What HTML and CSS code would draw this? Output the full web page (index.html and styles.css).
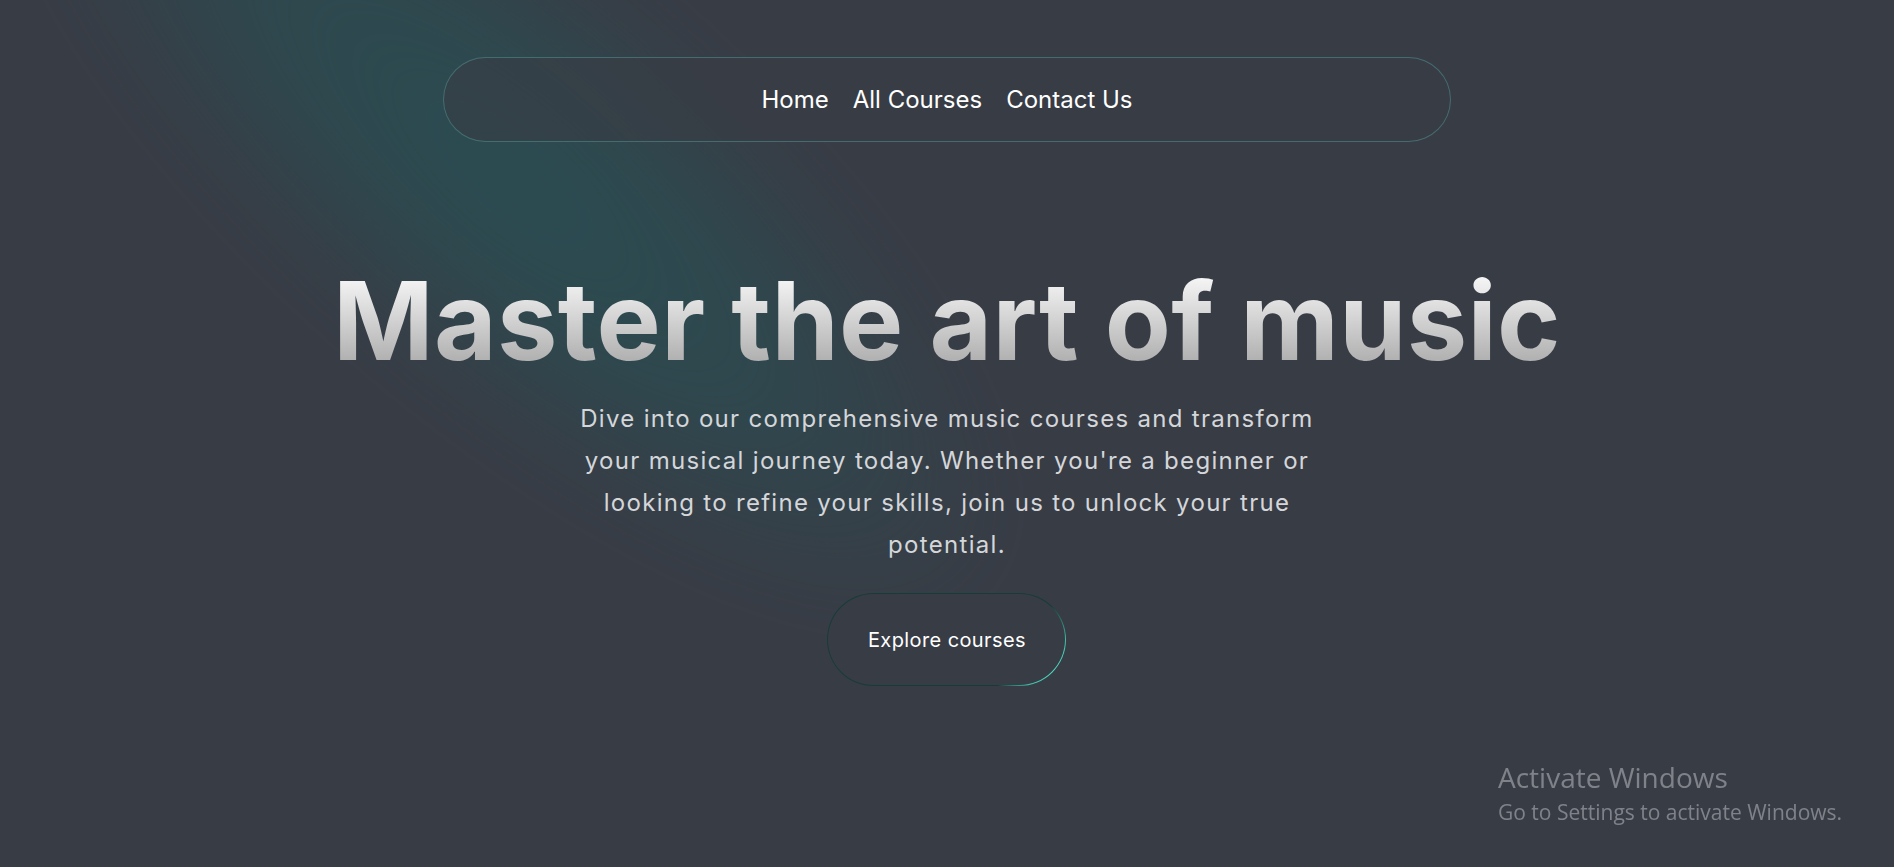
FILE: index.html
```html
<!DOCTYPE html>
<html lang="en">
<head>
<meta charset="utf-8">
<title>Music Courses</title>
<link rel="stylesheet" href="styles.css">
</head>
<body>
<div class="glow"></div>
<main class="page">
  <nav class="nav">
    <a class="nav-link" href="#">Home</a>
    <a class="nav-link" href="#">All Courses</a>
    <a class="nav-link" href="#">Contact Us</a>
  </nav>
  <section class="hero">
    <h1 class="hero-title">Master the art of music</h1>
    <p class="hero-text">Dive into our comprehensive music courses and transform your musical journey today. Whether you're a beginner or looking to refine your skills, join us to unlock your true potential.</p>
    <a class="hero-button" href="#">Explore courses</a>
  </section>
</main>
<div class="watermark">
  <div class="wm-title">Activate Windows</div>
  <div class="wm-sub">Go to Settings to activate Windows.</div>
</div>
</body>
</html>
```

FILE: styles.css
```css
* { box-sizing: border-box; }
html, body { height: 100%; }
body {
  margin: 0;
  background: #383c45;
  font-family: Inter, "Noto Sans", sans-serif;
  color: #fff;
  overflow: hidden;
  position: relative;
}
.glow {
  position: absolute;
  left: 310px;
  top: -450px;
  width: 400px;
  height: 1250px;
  border-radius: 50%;
  background: radial-gradient(ellipse at center, rgba(38,82,86,0.78) 0%, rgba(38,82,86,0.5) 40%, rgba(38,82,86,0) 72%);
  transform: rotate(-49deg);
  filter: blur(45px);
  pointer-events: none;
}
.page {
  position: relative;
  display: flex;
  flex-direction: column;
  align-items: center;
  padding-top: 57px;
}
.nav {
  width: 1008px;
  height: 85px;
  border: 1px solid rgba(72,120,124,0.8);
  border-radius: 999px;
  display: flex;
  justify-content: center;
  align-items: center;
  gap: 24px;
  background: rgba(56,60,69,0.6);
}
.nav-link {
  color: #fff;
  text-decoration: none;
  font-size: 24px;
}
.hero {
  display: flex;
  flex-direction: column;
  align-items: center;
  margin-top: 125px;
}
.hero-title {
  margin: 0;
  font-size: 108px;
  line-height: 1;
  font-weight: 700;
  letter-spacing: 0.3px;
  background: linear-gradient(180deg, #f3f3f3 12%, #a9a9a9 95%);
  -webkit-background-clip: text;
  background-clip: text;
  color: transparent;
}
.hero-text {
  margin: 23px 0 0;
  max-width: 760px;
  text-align: center;
  font-size: 24px;
  line-height: 42px;
  letter-spacing: 1.3px;
  color: #d4d6da;
}
.hero-button {
  margin-top: 27px;
  width: 239px;
  height: 93px;
  display: flex;
  align-items: center;
  justify-content: center;
  border-radius: 999px;
  border: 1.5px solid transparent;
  background:
    linear-gradient(#383c45, #383c45) padding-box,
    conic-gradient(from 0deg, #173b39 0deg, #173b39 72deg, #3fbfaa 90deg, #4fe0c8 105deg, #3fbfaa 118deg, #173b39 132deg, #173b39 360deg) border-box;
  color: #fff;
  text-decoration: none;
  font-size: 20px;
  letter-spacing: 0.4px;
}
.watermark {
  position: fixed;
  left: 1498px;
  top: 759px;
  color: rgba(200,200,205,0.5);
  font-family: "Open Sans", "Noto Sans", sans-serif;
}
.wm-title { font-size: 28px; line-height: 36px; }
.wm-sub { font-size: 21px; line-height: 35px; }
```
